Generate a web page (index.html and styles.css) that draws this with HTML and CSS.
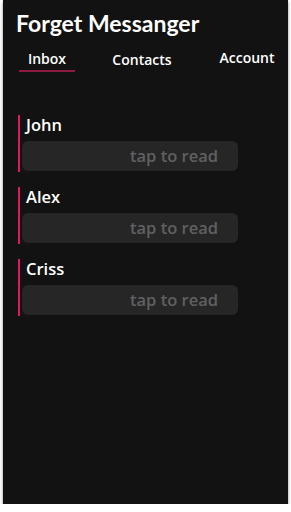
FILE: index.html
```html
<!DOCTYPE html>
<html lang="en">
<head>
    <meta charset="UTF-8">
    <meta name="viewport" content="width=device-width, initial-scale=1.0">
    <title>Forget Messanger</title>
    <link rel="stylesheet" href="styles.css">
</head>
<body>
    <div class="app">
        <h1 class="title">Forget Messanger</h1>
        <nav class="tabs">
            <div class="tab tab-inbox active">Inbox</div>
            <div class="tab tab-contacts">Contacts</div>
            <div class="tab tab-account">Account</div>
        </nav>

        <div class="messages">
            <div class="message">
                <div class="sender">John</div>
                <div class="bubble">tap to read</div>
            </div>
            <div class="message">
                <div class="sender">Alex</div>
                <div class="bubble">tap to read</div>
            </div>
            <div class="message">
                <div class="sender">Criss</div>
                <div class="bubble">tap to read</div>
            </div>
        </div>
    </div>
</body>
</html>
```

FILE: styles.css
```css
html, body {
    margin: 0;
    padding: 0;
    background-color: #fff;
}
.app {
    margin: 0 3px;
    height: 504px;
    background-color: #121212;
    color: #fff;
    box-shadow: 0 2px 3px rgba(0,0,0,0.45);
    font-family: 'Open Sans', 'DejaVu Sans', sans-serif;
    overflow: hidden;
}
.title {
    margin: 0;
    padding: 8px 0 0 13px;
    font-family: 'Lato', 'Liberation Sans', sans-serif;
    font-weight: 700;
    font-size: 23px;
    line-height: 31px;
}
.tabs {
    display: flex;
    align-items: flex-start;
    margin-top: 11px;
    height: 26px;
}
.tab {
    font-size: 14px;
    font-weight: 600;
    line-height: 17px;
    text-align: center;
}
.tab-inbox {
    margin-left: 16px;
    width: 56px;
    padding-bottom: 3px;
}
.tab-contacts {
    margin-left: 36px;
    width: 62px;
    padding-top: 1px;
}
.tab-account {
    margin-left: 45px;
    width: 58px;
    margin-top: -1px;
}
.tab.active {
    border-bottom: 2px solid #8d1b3d;
}
.messages {
    padding: 39px 0 0 15px;
}
.message {
    border-left: 2px solid #e3175e;
    padding: 0 0 1px 2px;
    margin-bottom: 15px;
    width: 216px;
}
.sender {
    padding-left: 4px;
    font-size: 16.5px;
    font-weight: 600;
    line-height: 20px;
}
.bubble {
    margin-top: 6px;
    height: 30px;
    line-height: 30px;
    background-color: #262626;
    border-radius: 6px;
    text-align: right;
    padding-right: 20px;
    font-size: 16.5px;
    font-weight: 600;
    color: #606060;
}
```
